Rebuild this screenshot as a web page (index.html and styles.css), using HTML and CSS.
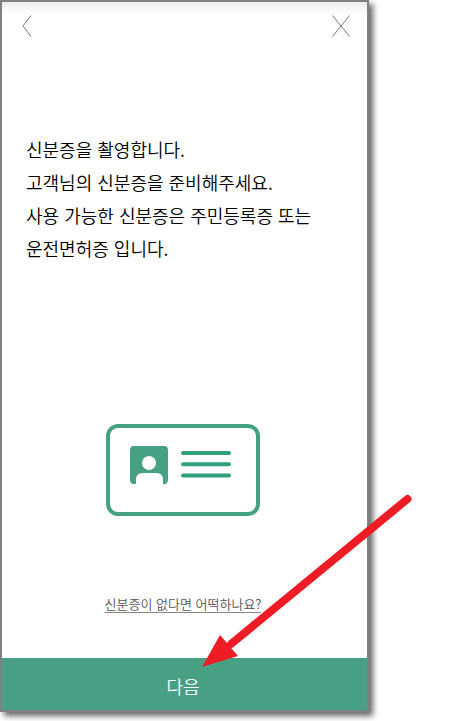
FILE: index.html
```html
<!DOCTYPE html>
<html lang="ko">
<head>
    <meta charset="UTF-8">
    <meta name="viewport" content="width=device-width, initial-scale=1.0">
    <title>신분증 촬영</title>
    <link rel="stylesheet" href="styles.css">
</head>
<body>
    <div class="phone">
        <header class="top-bar">
            <button class="icon-button" type="button" aria-label="이전">
                <svg width="10" height="22" viewBox="0 0 10 22">
                    <path d="M9 .5 L1 11 L9 21.5"/>
                </svg>
            </button>
            <button class="icon-button" type="button" aria-label="닫기">
                <svg width="18" height="22" viewBox="0 0 18 22">
                    <path d="M.5 .5 L17.5 21.5 M17.5 .5 L.5 21.5"/>
                </svg>
            </button>
        </header>

        <main class="content">
            <p class="message">
                신분증을 촬영합니다.<br>
                고객님의 신분증을 준비해주세요.<br>
                사용 가능한 신분증은 주민등록증 또는<br>
                운전면허증 입니다.
            </p>

            <svg class="id-card" width="156" height="94" viewBox="0 0 156 94">
                <rect class="card-frame" x="3" y="3" width="150" height="88" rx="10"/>
                <path class="card-photo" d="M28 23h31a4 4 0 0 1 4 4v30a4 4 0 0 1-5 4v-5a6 6 0 0 0-6-6H37a6 6 0 0 0-6 6v5h-2a4 4 0 0 1-4-4V27a4 4 0 0 1 3-4z"/>
                <circle class="card-head" cx="44" cy="40" r="7"/>
                <path class="card-lines" d="M78 30h46M78 41.200h46M78 52.500h46"/>
            </svg>

            <a class="help-link" href="#">신분증이 없다면 어떡하나요?</a>
        </main>

        <button class="next-button" type="button">다음</button>

        <!-- pointer to the next button -->
        <svg class="arrow" width="212" height="176" viewBox="0 0 212 176">
            <path class="arrow-shaft" d="M206.500 7 L30 152"/>
            <path class="arrow-head" d="M1 175 L19 143 L37 164 Z"/>
        </svg>
    </div>
</body>
</html>
```

FILE: styles.css
```css
* {
    box-sizing: border-box;
}
body {
    margin: 0;
    padding: 0 81px 9px 0;
    background-color: #ffffff;
    color: #000000;
    font-family: "Noto Sans CJK KR", sans-serif;
}
button {
    border: none;
    font-family: inherit;
    cursor: pointer;
}
.phone {
    position: relative;
    display: flex;
    flex-direction: column;
    min-height: calc(100vh - 9px);
    border: 2px solid #808080;
    background: linear-gradient(#ececec, #ffffff 12px);
    box-shadow: 4px 4px 6px rgba(0, 0, 0, 0.6);
}
.top-bar {
    display: flex;
    justify-content: space-between;
    padding: 13px 17px 0 20px;
}
.icon-button {
    display: flex;
    padding: 0;
    background: none;
}
.icon-button svg {
    fill: none;
    stroke: #777777;
    stroke-width: 1;
}
.content {
    flex: 1;
    display: flex;
    flex-direction: column;
    align-items: center;
}
.message {
    align-self: stretch;
    margin: 96px 0 0;
    padding-left: 24px;
    font-size: 18px;
    font-weight: 350;
    line-height: 33px;
    white-space: nowrap;
}
.id-card {
    margin: 158px 3px 0 0;
}
.card-frame {
    fill: none;
    stroke: #46a083;
    stroke-width: 4;
}
.card-photo {
    fill: #46a083;
}
.card-head {
    fill: #ffffff;
}
.card-lines {
    fill: none;
    stroke: #2fa07c;
    stroke-width: 4;
    stroke-linecap: round;
}
.help-link {
    margin: 78px 3px 0 0;
    border-bottom: 1px solid #888888;
    color: #555555;
    font-size: 13px;
    font-weight: 350;
    line-height: 17px;
    text-decoration: none;
}
.next-button {
    height: 52px;
    padding: 4px 3px 0 0;
    background-color: #48a084;
    color: #ffffff;
    font-size: 18px;
    font-weight: 350;
}
.arrow {
    position: absolute;
    right: -46px;
    bottom: 42px;
    pointer-events: none;
}
.arrow-shaft {
    stroke: #ee1c25;
    stroke-width: 8;
    stroke-linecap: round;
}
.arrow-head {
    fill: #ee1c25;
}
```
